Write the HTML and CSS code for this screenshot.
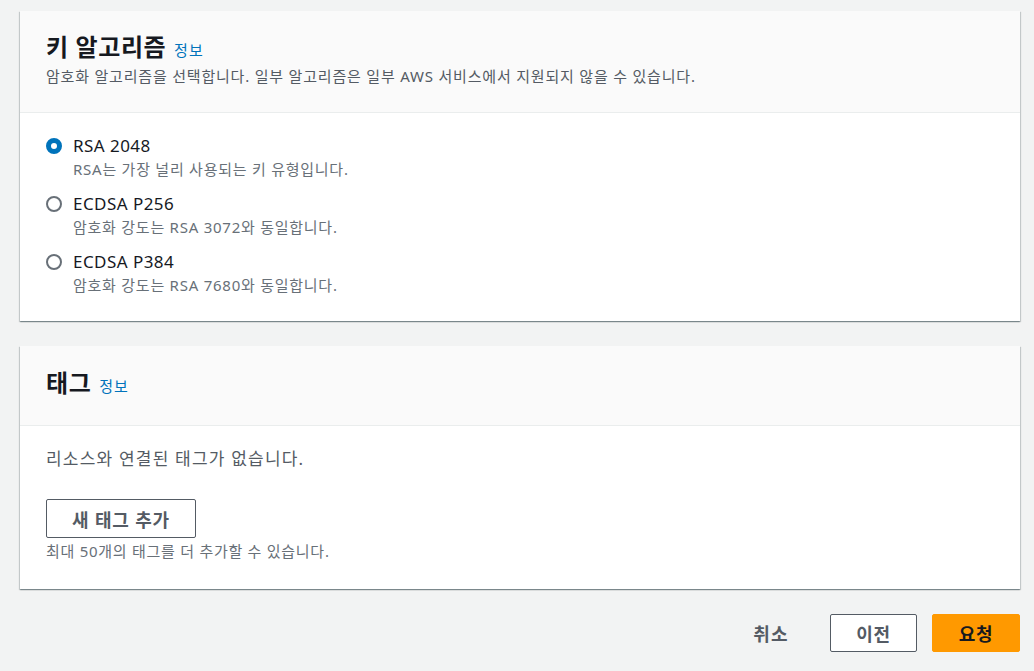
FILE: index.html
```html
<!DOCTYPE html>
<html lang="ko">
<head>
<meta charset="utf-8">
<link rel="stylesheet" href="styles.css">
</head>
<body>
<div class="page">
  <section class="card">
    <header class="card-header">
      <h2 class="card-title">키 알고리즘 <a class="info" href="#">정보</a></h2>
      <p class="card-desc">암호화 알고리즘을 선택합니다. 일부 알고리즘은 일부 AWS 서비스에서 지원되지 않을 수 있습니다.</p>
    </header>
    <div class="card-body radios">
      <label class="radio">
        <span class="dot checked"></span>
        <span class="radio-text">
          <span class="radio-label">RSA 2048</span>
          <span class="radio-desc">RSA는 가장 널리 사용되는 키 유형입니다.</span>
        </span>
      </label>
      <label class="radio">
        <span class="dot"></span>
        <span class="radio-text">
          <span class="radio-label">ECDSA P256</span>
          <span class="radio-desc">암호화 강도는 RSA 3072와 동일합니다.</span>
        </span>
      </label>
      <label class="radio">
        <span class="dot"></span>
        <span class="radio-text">
          <span class="radio-label">ECDSA P384</span>
          <span class="radio-desc">암호화 강도는 RSA 7680와 동일합니다.</span>
        </span>
      </label>
    </div>
  </section>

  <section class="card">
    <header class="card-header tags-header">
      <h2 class="card-title">태그 <a class="info" href="#">정보</a></h2>
    </header>
    <div class="card-body tags-body">
      <p class="empty">리소스와 연결된 태그가 없습니다.</p>
      <button class="btn btn-normal add-tag">새 태그 추가</button>
      <p class="hint">최대 50개의 태그를 더 추가할 수 있습니다.</p>
    </div>
  </section>

  <div class="actions">
    <button class="btn btn-link">취소</button>
    <button class="btn btn-normal">이전</button>
    <button class="btn btn-primary">요청</button>
  </div>
</div>
</body>
</html>
```

FILE: styles.css
```css
* { box-sizing: border-box; }
html, body { margin: 0; padding: 0; }
body {
  background: #f2f3f3;
  font-family: "Noto Sans", "Noto Sans CJK KR", sans-serif;
  color: #16191f;
}
.page {
  padding: 11px 14px 0 20px;
  display: flex;
  flex-direction: column;
  gap: 25px;
}
.card {
  background: #fff;
  box-shadow: 0 1px 1px 0 rgba(0,28,36,.3), 1px 1px 1px 0 rgba(0,28,36,.15), -1px 1px 1px 0 rgba(0,28,36,.15);
}
.card-header {
  background: #fafafa;
  border-bottom: 1px solid #eaeded;
  padding: 21px 26px 0;
  height: 102px;
}
.tags-header { height: 80px; padding-top: 22px; }
.card-title {
  margin: 0;
  font-size: 24px;
  line-height: 29px;
  font-weight: 700;
  letter-spacing: 0.6px;
}
.tags-header .card-title { line-height: 30px; }
.info {
  font-size: 15px;
  font-weight: 400;
  letter-spacing: 1px;
  color: #0073bb;
  text-decoration: none;
  margin-left: 1px;
}
.card-desc {
  margin: 0;
  font-size: 15px;
  line-height: 22px;
  letter-spacing: 0.8px;
  color: #545b64;
}
.radios {
  padding: 22px 26px 25px;
  display: flex;
  flex-direction: column;
  gap: 13px;
}
.radio {
  display: flex;
  gap: 11px;
}
.dot {
  width: 16px;
  height: 16px;
  border-radius: 50%;
  border: 2px solid #687078;
  margin-top: 3px;
  flex: none;
}
.dot.checked { border: 5px solid #0073bb; }
.radio-text { display: flex; flex-direction: column; }
.radio-label { font-size: 17px; line-height: 22px; letter-spacing: 0.45px; color: #16191f; }
.radio-desc { font-size: 15px; line-height: 22px; letter-spacing: 0.75px; color: #687078; margin-top: 1px; }
.tags-body { padding: 21px 26px 28px; }
.empty { margin: 0; font-size: 17px; line-height: 24px; letter-spacing: 1.2px; color: #545b64; }
.hint { margin: 3px 0 0; font-size: 15px; line-height: 20px; letter-spacing: 0.73px; color: #687078; }
.btn {
  font-family: inherit;
  font-size: 18px;
  font-weight: 700;
  letter-spacing: 0.8px;
  border-radius: 2px;
  height: 38px;
  padding: 0;
  cursor: pointer;
}
.btn-normal {
  background: #fff;
  border: 1px solid #545b64;
  color: #545b64;
}
.add-tag { width: 150px; height: 39px; margin-top: 28px; }
.actions {
  display: flex;
  justify-content: flex-end;
  gap: 15px;
}
.btn-link { background: none; border: none; color: #545b64; width: 72px; letter-spacing: 1.2px; margin-right: 8px; }
.actions .btn-normal { width: 87px; }
.btn-primary { background: #ff9900; border: 1px solid #ff9900; color: #16191f; width: 88px; }
```
